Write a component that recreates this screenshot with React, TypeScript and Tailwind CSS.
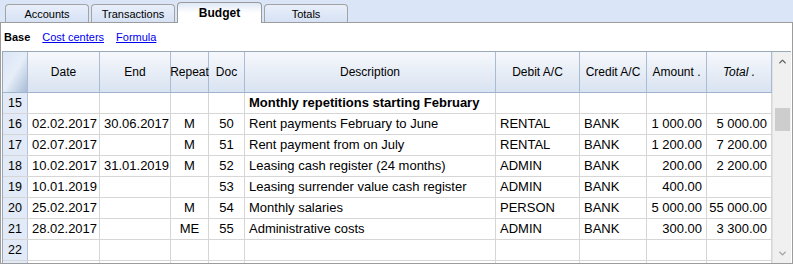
import { ChevronUp, ChevronDown } from "lucide-react";

type Row = {
  n?: number;
  date?: string;
  end?: string;
  rep?: string;
  doc?: string;
  desc?: string;
  bold?: boolean;
  debit?: string;
  credit?: string;
  amount?: string;
  total?: string;
};

const rows: Row[] = [
  { n: 15, desc: "Monthly repetitions starting February", bold: true },
  { n: 16, date: "02.02.2017", end: "30.06.2017", rep: "M", doc: "50", desc: "Rent payments February to June", debit: "RENTAL", credit: "BANK", amount: "1 000.00", total: "5 000.00" },
  { n: 17, date: "02.07.2017", rep: "M", doc: "51", desc: "Rent payment from on July", debit: "RENTAL", credit: "BANK", amount: "1 200.00", total: "7 200.00" },
  { n: 18, date: "10.02.2017", end: "31.01.2019", rep: "M", doc: "52", desc: "Leasing cash register (24 months)", debit: "ADMIN", credit: "BANK", amount: "200.00", total: "2 200.00" },
  { n: 19, date: "10.01.2019", doc: "53", desc: "Leasing surrender value cash register", debit: "ADMIN", credit: "BANK", amount: "400.00" },
  { n: 20, date: "25.02.2017", rep: "M", doc: "54", desc: "Monthly salaries", debit: "PERSON", credit: "BANK", amount: "5 000.00", total: "55 000.00" },
  { n: 21, date: "28.02.2017", rep: "ME", doc: "55", desc: "Administrative costs", debit: "ADMIN", credit: "BANK", amount: "300.00", total: "3 300.00" },
  { n: 22 },
  {},
];

const cols = "grid grid-cols-[25px_72px_71px_38px_36px_251px_84px_67px_60px_65px]";

function Tab({ label, active }: { label: string; active?: boolean }) {
  if (active) {
    return (
      <div className="w-[85px] h-[21px] -mb-px flex items-center justify-center rounded-t-[4px] border border-b-0 border-[#9a9a9a] bg-gradient-to-b from-[#dfe8f7] via-white to-white text-[12px] font-bold text-black relative z-10">
        {label}
      </div>
    );
  }
  return (
    <div className="w-[84px] h-[18px] flex items-center justify-center rounded-t-[4px] border border-b-0 border-[#a3a3a3] bg-gradient-to-b from-[#e9effa] to-[#d6e2f5] text-[11px] text-black pt-[1px]">
      {label}
    </div>
  );
}

function Cell({ children, cls = "" }: { children?: React.ReactNode; cls?: string }) {
  return (
    <div className={`border-r border-[#d6d6d6] flex items-center overflow-hidden whitespace-nowrap ${cls}`}>
      {children}
    </div>
  );
}

function Head({ children, italic }: { children: React.ReactNode; italic?: boolean }) {
  return (
    <div className={`border-r border-[#a9bcd4] flex items-center justify-center text-[12px] ${italic ? "italic" : ""}`}>
      {children}
    </div>
  );
}

export default function App() {
  return (
    <div className="w-[793px] h-[267px] bg-white overflow-hidden font-['Liberation_Sans',Arial,sans-serif] text-black">
      <div className="h-[22px] bg-[#dae5f7] flex items-end pl-[5px] gap-[2px]">
        <Tab label="Accounts" />
        <Tab label="Transactions" />
        <Tab label="Budget" active />
        <Tab label="Totals" />
      </div>

      <div className="h-[242px] border border-[#9c9c9c] flex flex-col px-px">
        <div className="h-[28px] flex items-center gap-[12px] text-[11px] pl-[2px] shrink-0">
          <span className="font-bold">Base</span>
          <span className="text-[#0000ee] underline">Cost centers</span>
          <span className="text-[#0000ee] underline">Formula</span>
        </div>

        <div className="flex flex-1 min-h-0 border-t border-l border-[#9aa9ba] overflow-hidden">
          <div className="w-[769px] shrink-0">
            <div className={`${cols} h-[41px] border-b border-[#9fb4cd] bg-gradient-to-b from-[#f6f8fc] to-[#d9e3f1]`}>
              <div className="border-r border-[#a9bcd4] bg-gradient-to-br from-[#dbe6f5] via-[#e6eef8] to-[#a9bdd6]" />
              <Head>Date</Head>
              <Head>End</Head>
              <Head>Repeat</Head>
              <Head>Doc</Head>
              <Head>Description</Head>
              <Head>Debit A/C</Head>
              <Head>Credit A/C</Head>
              <Head>Amount .</Head>
              <Head italic>Total .</Head>
            </div>

            {rows.map((r, i) => (
              <div key={i} className={`${cols} h-[21px] border-b border-[#d6d6d6] text-[13px]`}>
                <div className="bg-[#e1eaf6] border-r border-[#b4c5da] flex items-center pl-[5px] text-[12.5px]">
                  {r.n}
                </div>
                <Cell cls="pl-[4px]">{r.date}</Cell>
                <Cell cls="pl-[4px]">{r.end}</Cell>
                <Cell cls="justify-center">{r.rep}</Cell>
                <Cell cls="justify-center">{r.doc}</Cell>
                <Cell cls={`pl-[4px] ${r.bold ? "font-bold" : ""}`}>{r.desc}</Cell>
                <Cell cls="pl-[4px]">{r.debit}</Cell>
                <Cell cls="pl-[4px]">{r.credit}</Cell>
                <Cell cls="justify-end pr-[4px]">{r.amount}</Cell>
                <Cell cls="justify-end pr-[4px]">{r.total}</Cell>
              </div>
            ))}
          </div>

          <div className="w-[19px] shrink-0 bg-[#f0f0f0] border-l border-[#e2e2e2] flex flex-col items-center">
            <ChevronUp className="w-[11px] h-[11px] mt-[4px] text-[#606060]" strokeWidth={3} />
            <div className="mt-[41px] w-[15px] h-[23px] bg-[#cdcdcd]" />
            <div className="flex-1" />
            <ChevronDown className="w-[11px] h-[11px] mb-[4px] text-[#a0a0a0]" strokeWidth={3} />
          </div>
        </div>
      </div>
    </div>
  );
}
